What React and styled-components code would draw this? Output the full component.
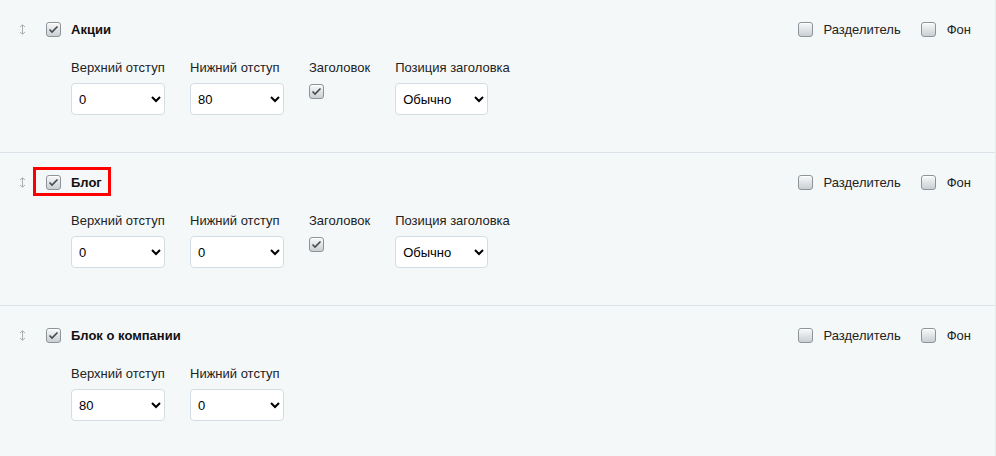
import styled, { createGlobalStyle } from "styled-components";

const GlobalStyle = createGlobalStyle`
  html, body {
    margin: 0;
    padding: 0;
    background: #f5f8f9;
  }

  body {
    font-family: "Liberation Sans", Arial, sans-serif;
    font-size: 13px;
    color: #000;
  }
`

const Page = styled.div`
  width: 995px;
  border-right: 1px solid #e4eaed;
  background: #f5f8f9;
`

const Block = styled.section`
  padding: 21px 24px 37px 18px;
  border-bottom: 1px solid #dbe3e8;
`

const BlockHeader = styled.header`
  display: flex;
  align-items: center;
  height: 16px;
`

const DragHandle = styled.span`
  width: 9px;
  display: flex;
  justify-content: center;
  margin-right: 19px;
  color: #a8adb0;
`

const TitleGroup = styled.label`
  display: flex;
  align-items: center;
  gap: 10px;
  padding: 5px 6px 3px 10px;
  margin: -5px -6px -3px -10px;
  outline: ${props => props.$highlighted ? "3px solid #ff0000" : "none"};

  strong {
    font-size: 13px;
    font-weight: 700;
    color: #111;
  }
`

const Options = styled.div`
  margin-left: auto;
  display: flex;
  align-items: center;
  gap: 20px;
`

const Option = styled.label`
  display: flex;
  align-items: center;
  gap: 11px;
  color: #222;
`

const Box = styled.span`
  box-sizing: border-box;
  width: 15px;
  height: 15px;
  flex: none;
  display: flex;
  align-items: center;
  justify-content: center;
  border: 1px solid #8c9499;
  border-radius: 3px;
  background: linear-gradient(#f8f9f9, #c9cfd3);
  box-shadow: inset 0 1px 0 #fff;
`

const Fields = styled.div`
  display: flex;
  gap: 25px;
  margin: 23px 0 0 53px;
`

const Field = styled.div`
  display: flex;
  flex-direction: column;
  gap: 7px;

  & > span {
    line-height: 16px;
    color: #222;
  }
`

const Select = styled.select`
  box-sizing: border-box;
  width: ${props => props.$width || 94}px;
  height: 32px;
  padding: 0 4px 0 3px;
  border: 1px solid #d3dde3;
  border-radius: 4px;
  background: #fff;
  font-family: "Liberation Sans", Arial, sans-serif;
  font-size: 13px;
  color: #000;
`

const FieldCheck = styled.div`
  padding-top: 1px;
`

function CheckMark() {
  return (
    <svg width="11" height="9" viewBox="0 0 11 9">
      <path d="M1.5 4.5 L4 7 L9.5 1.5" fill="none" stroke="#454a4e" strokeWidth="1.6" />
    </svg>
  )
}

function Checkbox({ checked }) {
  return <Box>{checked && <CheckMark />}</Box>
}

function ArrowsIcon() {
  return (
    <svg width="7" height="11" viewBox="0 0 7 11">
      <path d="M3.5 1 V10 M1 3 L3.5 0.8 L6 3 M1 8 L3.5 10.2 L6 8" fill="none" stroke="currentColor" strokeWidth="1" />
    </svg>
  )
}

const blocks = [
  { title: "Акции", top: "0", bottom: "80", heading: true },
  { title: "Блог", top: "0", bottom: "0", heading: true, highlighted: true },
  { title: "Блок о компании", top: "80", bottom: "0", heading: false }
]

const paddings = ["0", "10", "20", "40", "60", "80"]

function PaddingSelect({ value }) {
  return (
    <Select defaultValue={value}>
      {paddings.map(p => <option key={p} value={p}>{p}</option>)}
    </Select>
  )
}

function BlockRow({ block }) {
  const { title, top, bottom, heading, highlighted } = block

  return (
    <Block>
      <BlockHeader>
        <DragHandle><ArrowsIcon /></DragHandle>

        <TitleGroup $highlighted={highlighted}>
          <Checkbox checked />
          <strong>{title}</strong>
        </TitleGroup>

        <Options>
          <Option><Checkbox /> Разделитель</Option>
          <Option><Checkbox /> Фон</Option>
        </Options>
      </BlockHeader>

      <Fields>
        <Field>
          <span>Верхний отступ</span>
          <PaddingSelect value={top} />
        </Field>

        <Field>
          <span>Нижний отступ</span>
          <PaddingSelect value={bottom} />
        </Field>

        {heading && (
          <>
            <Field>
              <span>Заголовок</span>
              <FieldCheck><Checkbox checked /></FieldCheck>
            </Field>

            <Field>
              <span>Позиция заголовка</span>
              <Select $width={93} defaultValue="normal">
                <option value="normal">Обычно</option>
                <option value="center">По центру</option>
              </Select>
            </Field>
          </>
        )}
      </Fields>
    </Block>
  )
}

export default function App() {
  return (
    <Page>
      <GlobalStyle />
      {blocks.map(b => <BlockRow key={b.title} block={b} />)}
    </Page>
  );
}
